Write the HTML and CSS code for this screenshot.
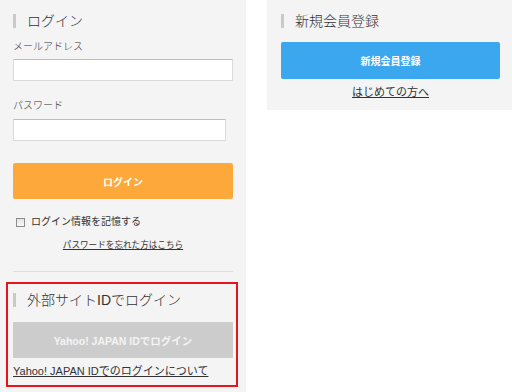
FILE: index.html
```html
<!DOCTYPE html>
<html lang="ja">
<head>
<meta charset="utf-8">
<link rel="stylesheet" href="styles.css">
</head>
<body>
<div class="page">
  <div class="panel panel-login">
    <h2 class="heading">ログイン</h2>
    <div class="label label-mail">メールアドレス</div>
    <div class="input input-mail"></div>
    <div class="label label-pass">パスワード</div>
    <div class="input input-pass"></div>
    <div class="btn btn-orange">ログイン</div>
    <div class="remember"><span class="checkbox"></span><span>ログイン情報を記憶する</span></div>
    <div class="forgot"><a>パスワードを忘れた方はこちら</a></div>
    <hr class="sep">
    <div class="external">
      <h2 class="heading">外部サイトIDでログイン</h2>
      <div class="btn btn-gray">Yahoo! JAPAN IDでログイン</div>
      <a class="yahoo-link">Yahoo! JAPAN IDでのログインについて</a>
    </div>
  </div>
  <div class="panel panel-register">
    <h2 class="heading">新規会員登録</h2>
    <div class="btn btn-blue">新規会員登録</div>
    <div class="first"><a>はじめての方へ</a></div>
  </div>
</div>
</body>
</html>
```
FILE: styles.css
```css
html, body {
  margin: 0;
  padding: 0;
  background: #ffffff;
}
body {
  font-family: "Liberation Sans", "Noto Sans CJK JP", sans-serif;
  color: #333333;
}
.page {
  display: flex;
  align-items: flex-start;
  width: 512px;
  height: 392px;
  overflow: hidden;
}
.panel {
  background: #f4f4f4;
  box-sizing: border-box;
}
.panel-login {
  width: 246px;
  height: 392px;
  padding: 14px 13px 0 13px;
}
.panel-register {
  width: 245px;
  margin-left: 21px;
  padding: 14px 12px 11px 14px;
}
.heading {
  margin: 0;
  font-size: 14px;
  font-weight: 300;
  line-height: 14px;
  height: 14px;
  border-left: 3px solid #cacaca;
  padding-left: 11px;
  color: #333;
  white-space: nowrap;
}
.label {
  font-size: 10px;
  font-weight: 300;
  line-height: 16px;
  color: #333;
}
.label-mail { margin-top: 11px; }
.label-pass { margin-top: 17px; }
.input {
  box-sizing: border-box;
  height: 22px;
  background: #ffffff;
  border: 1px solid #dadada;
  border-top-color: #bdbdbd;
  border-radius: 1px;
}
.input-mail { margin-top: 4px; width: 220px; }
.input-pass { margin-top: 5px; width: 213px; }
.btn {
  display: flex;
  align-items: center;
  justify-content: center;
  color: #ffffff;
  font-weight: bold;
  font-size: 10px;
  border-radius: 2px;
}
.btn-orange {
  margin-top: 22px;
  height: 36px;
  background: #fda83a;
}
.remember {
  margin-top: 15px;
  display: flex;
  align-items: center;
  gap: 6px;
  font-size: 10px;
  line-height: 16px;
}
.checkbox {
  display: inline-block;
  box-sizing: border-box;
  width: 9px;
  height: 9px;
  margin-left: 3px;
  border: 1px solid #8c8c8c;
  background: linear-gradient(#e2e2e2, #fafafa);
}
.forgot {
  margin-top: 8px;
  text-align: center;
  font-size: 8.6px;
  line-height: 14px;
}
.forgot a, .first a, .yahoo-link {
  color: #333;
  text-decoration: underline;
}
.sep {
  margin: 19px 0 0 0;
  border: 0;
  height: 1px;
  background: #dedede;
}
.external {
  margin: 10px -5px 0 -7px;
  border: 2px solid #e5151b;
  padding: 9px 3px 7px 5px;
}
.btn-gray {
  margin-top: 15px;
  height: 36px;
  background: #cccccc;
  color: #f4f4f4;
  font-size: 10.5px;
  border-radius: 1px;
}
.yahoo-link {
  display: block;
  margin-top: 6px;
  font-size: 11px;
  line-height: 14px;
  white-space: nowrap;
}
.btn-blue {
  margin-top: 14px;
  height: 37px;
  background: #3aa7ee;
}
.first {
  margin-top: 6px;
  text-align: center;
  font-size: 11px;
  line-height: 14px;
}
```
